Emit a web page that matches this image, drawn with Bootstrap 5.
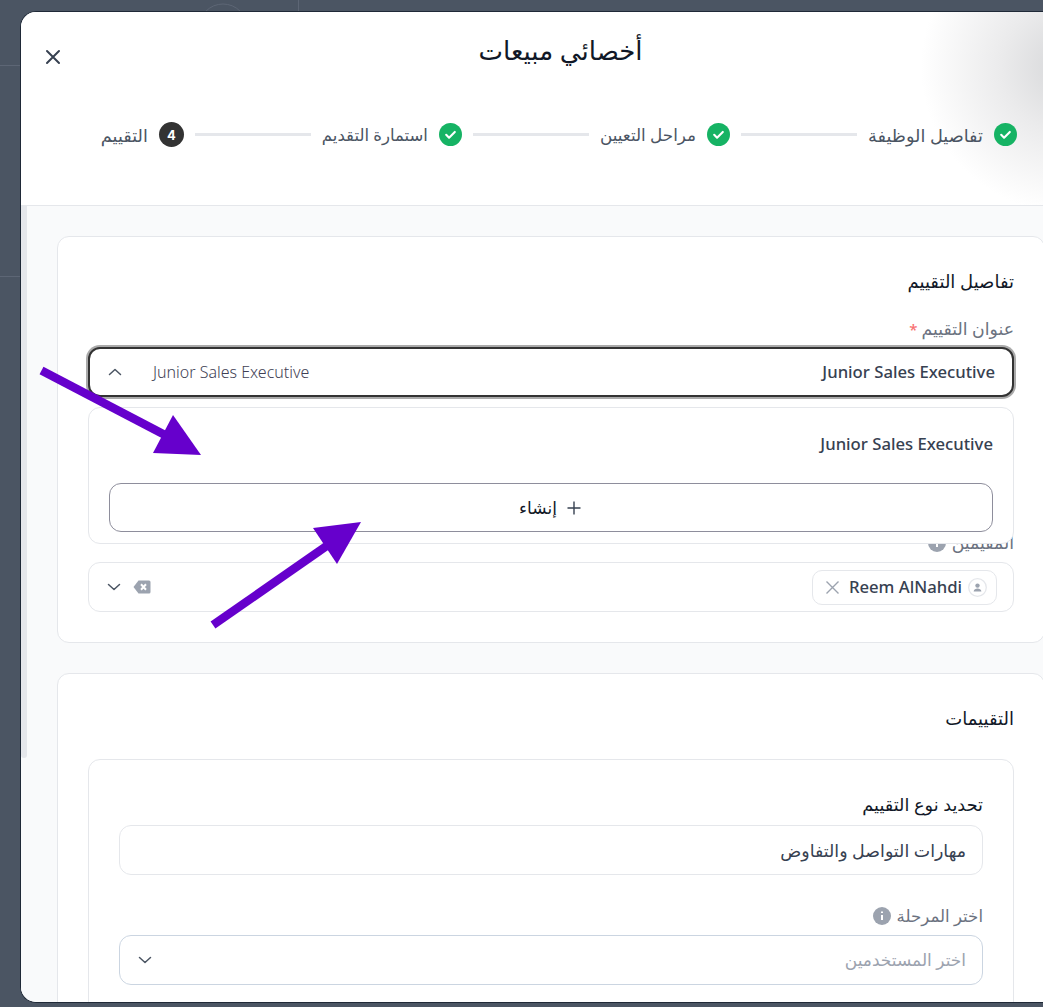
<!DOCTYPE html>
<html lang="ar" dir="rtl">
<head>
    <meta charset="UTF-8">
    <meta name="viewport" content="width=device-width, initial-scale=1.0">
    <title>أخصائي مبيعات</title>
    <link href="https://cdn.jsdelivr.net/npm/bootstrap@5.3.0/dist/css/bootstrap.min.css" rel="stylesheet">
    <style>
        html, body { height: 100%; }
        body {
            background: #4b5563;
            font-family: "Noto Sans", "DejaVu Sans", sans-serif;
            overflow: hidden;
            color: #374151;
            position: relative;
        }
        .backdrop-art { position: absolute; left: 0; top: 0; width: 1043px; height: 1007px; }
        .arrow-art { position: absolute; left: 0; top: 0; width: 1043px; height: 1007px; z-index: 10; pointer-events: none; }

        .dialog-box {
            position: absolute;
            left: 20px;
            top: 11px;
            width: 1041px;
            height: 992px;
            background: #fff;
            border: 1px solid #1f2937;
            border-right: 0;
            border-radius: 16px 0 0 16px;
            overflow: hidden;
            display: flex;
            flex-direction: column;
        }
        .dialog-head {
            height: 194px;
            flex: none;
            border-bottom: 1px solid #e5e7eb;
            position: relative;
            background: radial-gradient(circle 145px at 1045px 55px, #d6d7d9 0%, #ebebec 45%, #ffffff 100%);
        }
        .dialog-title {
            font-size: 26px;
            font-weight: 500;
            color: #111827;
            text-align: center;
            margin: 0;
            padding-top: 18px;
            padding-left: 39px;
            line-height: 40px;
        }
        .close-x { position: absolute; left: 23px; top: 36px; width: 18px; height: 18px; }
        .step-row {
            display: flex;
            align-items: center;
            gap: 11px;
            padding-right: 44px;
            margin-top: 52px;
            font-size: 16.8px;
            line-height: 24px;
            color: #4b5563;
            font-weight: 500;
        }
        .step-wide { font-size: 17.7px; }
        .step-slim { font-size: 16.5px; }
        .step-check { width: 23px; height: 23px; flex: none; }
        .step-num {
            width: 25px; height: 25px; flex: none;
            border-radius: 50%;
            background: #333;
            color: #fff;
            font-size: 13px;
            font-weight: 700;
            font-family: "Inter", sans-serif;
            display: flex; align-items: center; justify-content: center;
        }
        .step-line { width: 116px; height: 3px; background: #e5e7eb; flex: none; }

        .dialog-main { flex: 1; display: flex; min-height: 0; background: #f9fafb; }
        .dialog-scroll { flex: none; width: 1034px; padding: 30px 16px 0 30px; overflow: hidden; }
        .scroll-track { width: 6px; flex: none; }
        .scroll-thumb { height: 552px; background: #e5e7eb; border-radius: 0 0 3px 3px; }

        .section-card {
            background: #fff;
            border: 1px solid #e5e7eb;
            border-radius: 12px;
            padding: 30px 30px 30px 30px;
            margin-bottom: 30px;
        }
        .section-title { font-size: 18px; font-weight: 500; color: #111827; line-height: 28px; margin: 0 0 22px; }
        .field-label { font-size: 17.3px; font-weight: 500; color: #6b7280; line-height: 24px; display: flex; align-items: center; gap: 6px; margin-bottom: 6px; }
        .req-mark { color: #f87171; font-size: 15px; margin-right: -2px; }
        .info-dot { width: 18px; height: 18px; flex: none; }

        .control-box {
            height: 50px;
            border: 1px solid #e5e7eb;
            border-radius: 12px;
            background: #fff;
            display: flex;
            align-items: center;
            font-size: 17.4px;
        }
        .control-open {
            border: 2px solid #333;
            box-shadow: 0 0 0 2px #aaa;
            padding: 0 17px 0 17px;
            font-size: 16.7px;
            font-weight: 500;
        }
        .ghost-value { font-weight: 300; font-size: 16px; color: #3f3f55; margin-inline-start: auto; margin-inline-end: 30px; }
        .chev { width: 16px; height: 16px; flex: none; }

        .select-wrap { position: relative; }
        .drop-panel {
            position: absolute;
            top: 60px;
            left: 0;
            right: 0;
            height: 137px;
            background: #fff;
            border: 1px solid #e5e7eb;
            border-radius: 12px;
            padding: 23px 20px 0;
            z-index: 2;
            font-weight: 500;
            font-size: 16.7px;
        }
        .add-btn {
            display: flex; align-items: center; justify-content: center; gap: 10px;
            width: 100%;
            height: 49px;
            margin-top: 27px;
            padding: 0 2px 0 0;
            background: #fff;
            border: 1px solid #8e8e9c;
            border-radius: 12px;
            color: #111827;
            font-size: 17px;
            font-weight: 500;
        }
        .chip {
            height: 35px;
            border: 1px solid #e5e7eb;
            border-radius: 10px;
            display: flex; align-items: center;
            padding: 0 9px 0 12px;
            gap: 6px;
            font-weight: 500;
            font-size: 16.7px;
        }
        .chip-x { width: 15px; height: 15px; margin-right: 3px; }
        .inner-card {
            border: 1px solid #e5e7eb;
            border-radius: 12px;
            padding: 32px 30px 0;
            height: 400px;
        }
        .placeholder-txt { color: #9ca3af; font-size: 17px; }
        .assessor-label { margin-top: 134px; height: 24px; margin-bottom: 7px; }
        .box-tools { margin-left: 1px; }
        .tools-gap { gap: 11px; }
        .inner-gap { margin-bottom: 27px; }
        .ink-label { color: #111827; font-size: 17.7px; margin-bottom: 9px; }
        .mb-field { margin-bottom: 29px; }
        .stage-label { font-size: 16.6px; margin-bottom: 7px; }
        .stage-box { border-color: #cbd5e1; }
    </style>
</head>
<body>
    <svg class="backdrop-art" viewBox="0 0 1043 1007">
        <path d="M0 65.5H21M0 276.5H21M298.5 0V12" stroke="#5d6675" fill="none"/>
        <circle cx="223" cy="28" r="24" fill="none" stroke="#5d6675"/>
    </svg>

    <div class="dialog-box">
        <div class="dialog-head">
            <h1 class="dialog-title">أخصائي مبيعات</h1>
            <svg class="close-x" viewBox="0 0 18 18"><path d="M3 3L15 15M15 3L3 15" stroke="#374151" stroke-width="2" stroke-linecap="round"/></svg>
            <div class="step-row">
                <svg class="step-check" viewBox="0 0 24 24"><circle cx="12" cy="12" r="12" fill="#16b364"/><path d="M7.5 12.3l3 3 6-6" fill="none" stroke="#fff" stroke-width="2.2" stroke-linecap="round" stroke-linejoin="round"/></svg>
                <span class="step-wide">تفاصيل الوظيفة</span>
                <div class="step-line"></div>
                <svg class="step-check" viewBox="0 0 24 24"><circle cx="12" cy="12" r="12" fill="#16b364"/><path d="M7.5 12.3l3 3 6-6" fill="none" stroke="#fff" stroke-width="2.2" stroke-linecap="round" stroke-linejoin="round"/></svg>
                <span>مراحل التعيين</span>
                <div class="step-line"></div>
                <svg class="step-check" viewBox="0 0 24 24"><circle cx="12" cy="12" r="12" fill="#16b364"/><path d="M7.5 12.3l3 3 6-6" fill="none" stroke="#fff" stroke-width="2.2" stroke-linecap="round" stroke-linejoin="round"/></svg>
                <span class="step-slim">استمارة التقديم</span>
                <div class="step-line"></div>
                <div class="step-num">4</div>
                <span class="step-wide">التقييم</span>
            </div>
        </div>

        <div class="dialog-main">
            <div class="dialog-scroll">
                <div class="section-card">
                    <p class="section-title">تفاصيل التقييم</p>
                    <div class="field-label">عنوان التقييم <span class="req-mark">*</span></div>
                    <div class="select-wrap">
                        <div class="control-box control-open">
                            <span>Junior Sales Executive</span>
                            <span class="ghost-value">Junior Sales Executive</span>
                            <svg class="chev" viewBox="0 0 16 16"><path d="M2.5 10.5L8 5.5l5.5 5" fill="none" stroke="#4b5563" stroke-width="1.5" stroke-linecap="round" stroke-linejoin="round"/></svg>
                        </div>
                        <div class="drop-panel">
                            <div>Junior Sales Executive</div>
                            <button type="button" class="add-btn">
                                <svg width="14" height="14" viewBox="0 0 14 14"><path d="M7 .5v13M.5 7h13" stroke="#374151" stroke-width="1.4"/></svg>
                                <span>إنشاء</span>
                            </button>
                        </div>
                    </div>
                    <div class="field-label assessor-label">المقيمين
                        <svg class="info-dot" viewBox="0 0 18 18"><circle cx="9" cy="9" r="9" fill="#9ca3af"/><path d="M9 8v5M9 4.6v1.4" stroke="#fff" stroke-width="2"/></svg>
                    </div>
                    <div class="control-box px-3">
                        <div class="chip">
                            <svg width="19" height="19" viewBox="0 0 19 19"><circle cx="9.5" cy="9.5" r="8.8" fill="#fff" stroke="#e5e7eb" stroke-width="1.3"/><circle cx="9.5" cy="7.6" r="2.2" fill="#9ca3af"/><path d="M5.6 13.4c.4-2 2-2.9 3.9-2.9s3.5.9 3.9 2.9z" fill="#9ca3af"/></svg>
                            <span>Reem AlNahdi</span>
                            <svg class="chip-x" viewBox="0 0 15 15"><path d="M1.5 1.5L13.5 13.5M13.5 1.5L1.5 13.5" stroke="#9ca3af" stroke-width="1.4"/></svg>
                        </div>
                        <div class="d-flex align-items-center me-auto box-tools tools-gap">
                            <svg width="18" height="14" viewBox="0 0 18 14"><path d="M5.5.5H16A1.5 1.5 0 0 1 17.5 2v10a1.5 1.5 0 0 1-1.5 1.5H5.5L.5 7z" fill="#9ca3af"/><path d="M8 4.3l5 5.4M13 4.3l-5 5.4" stroke="#fff" stroke-width="2"/></svg>
                            <svg class="chev" viewBox="0 0 16 16"><path d="M2.5 5.5L8 10.5l5.5-5" fill="none" stroke="#4b5563" stroke-width="1.5" stroke-linecap="round" stroke-linejoin="round"/></svg>
                        </div>
                    </div>
                </div>

                <div class="section-card">
                    <p class="section-title inner-gap">التقييمات</p>
                    <div class="inner-card">
                        <div class="field-label ink-label">تحديد نوع التقييم</div>
                        <div class="control-box px-3 mb-field">مهارات التواصل والتفاوض</div>
                        <div class="field-label stage-label">اختر المرحلة
                            <svg class="info-dot" viewBox="0 0 18 18"><circle cx="9" cy="9" r="9" fill="#9ca3af"/><path d="M9 8v5M9 4.6v1.4" stroke="#fff" stroke-width="2"/></svg>
                        </div>
                        <div class="control-box px-3 stage-box">
                            <span class="placeholder-txt">اختر المستخدمين</span>
                            <svg class="chev me-auto box-tools" viewBox="0 0 16 16"><path d="M2.5 5.5L8 10.5l5.5-5" fill="none" stroke="#4b5563" stroke-width="1.5" stroke-linecap="round" stroke-linejoin="round"/></svg>
                        </div>
                    </div>
                </div>
            </div>
            <div class="scroll-track"><div class="scroll-thumb"></div></div>
        </div>
    </div>

    <svg class="arrow-art" viewBox="0 0 1043 1007">
        <path d="M41.5 370.5L165 435" stroke="#6600cc" stroke-width="8.5" fill="none"/>
        <path d="M173 415L201 455L153 453Z" fill="#6600cc"/>
        <path d="M213 625L328 545" stroke="#6600cc" stroke-width="8.5" fill="none"/>
        <path d="M361 522L313 528L337 564Z" fill="#6600cc"/>
    </svg>
</body>
</html>
